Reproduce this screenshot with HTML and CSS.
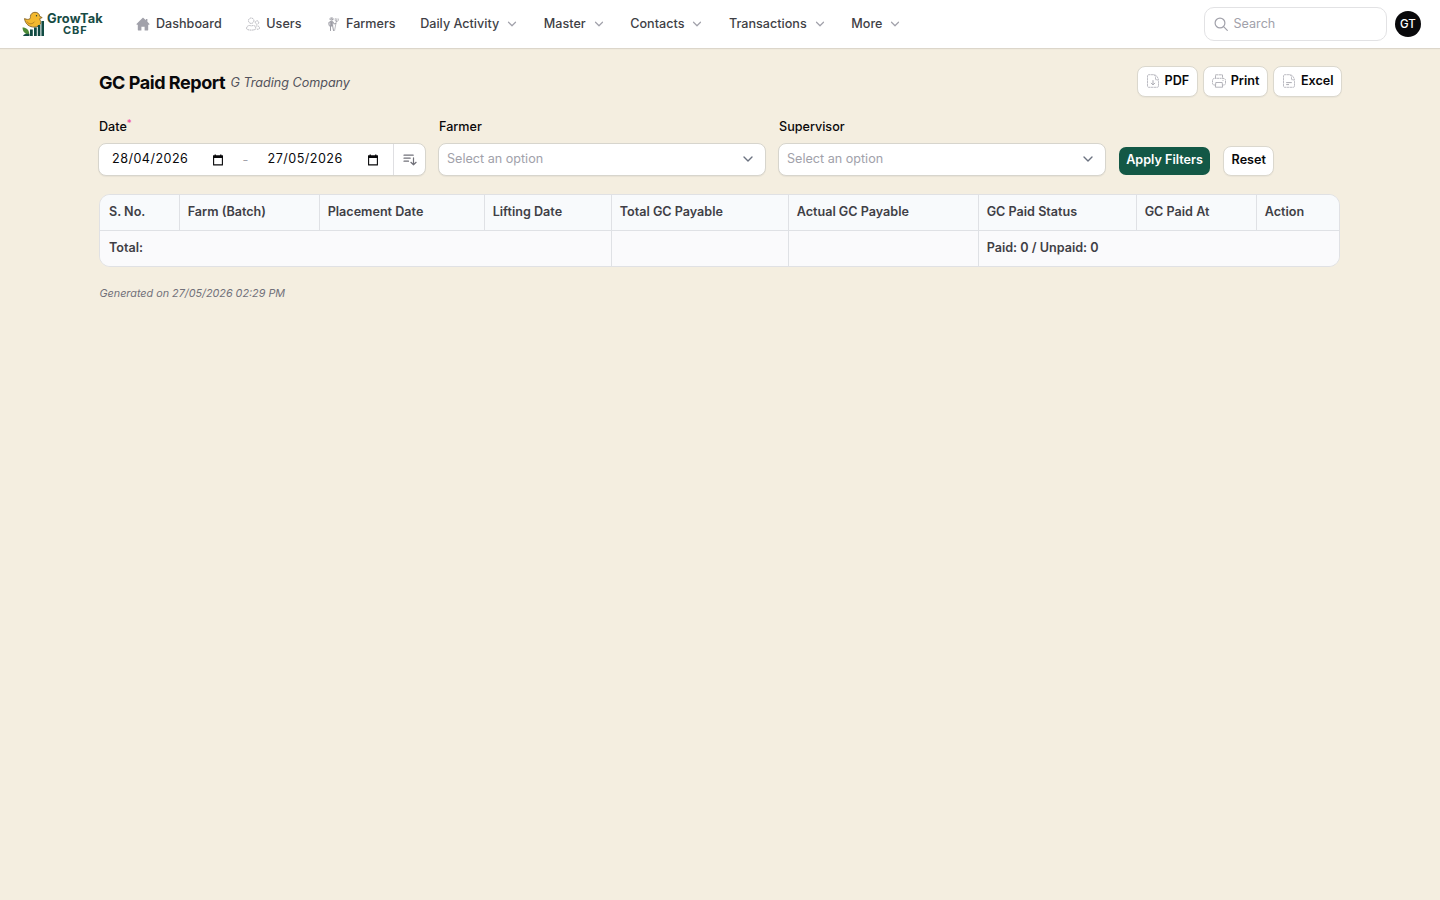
FILE: index.html
```html
<!DOCTYPE html>
<html lang="en">
<head>
<meta charset="utf-8">
<title>GC Paid Report</title>
<link rel="stylesheet" href="styles.css">
</head>
<body>
<svg class="defs" width="0" height="0">
  <symbol id="chevron" viewBox="0 0 20 20"><path d="M5 7.5l5 5 5-5" fill="none" stroke="currentColor" stroke-width="1.7" stroke-linecap="round" stroke-linejoin="round"/></symbol>
  <symbol id="calendar" viewBox="0 0 12 12"><path d="M1.600 2h8.800v8.900H1.600z" fill="none" stroke="currentColor" stroke-width="1.100" stroke-linejoin="round"/><path d="M1 1.600h10v2.300H1zM2.600.5h1.300v2H2.600zM8.100.5h1.300v2H8.100z" fill="currentColor"/></symbol>
</svg>
<header class="topbar">
  <a class="logo">
    <svg class="logo-mark" viewBox="0 0 23 26">
      <path d="M2.500 7.600C4.500 8.500 6.500 8.800 8 7.700 8.700 7.100 8.300 6.200 8.400 5.400 8.600 3 10.500 1.300 13 1.300c2.700 0 4.600 1.700 4.600 4l2.600 1.300-2.500 1c0 1.300 1.200 2.200 1 4.200-.3 2.500-2.600 4.300-6.200 4.300-5 0-9.200-2.700-10-8.500z" fill="#f4b92f" stroke="#846327" stroke-width=".9"/>
      <path d="M5 10.500c1.300 3 5.500 3 7.500.2" fill="none" stroke="#a97820" stroke-width=".9"/>
      <circle cx="14.500" cy="4.800" r=".7" fill="#173f38"/>
      <path d="M8 18.500h2.800V25H8zM12 16.500h2.800V25H12zM15.800 14h2.600v11h-2.600zM19.400 10H22v15h-2.600z" fill="#124b43"/>
      <path d="M.5 16.500c4 0 6.500 2 6.800 7C3.300 23.300.7 21 .5 16.500z" fill="#4c8b37"/>
      <path d="M1 25c1-2 3.500-2.700 6.500-1.700V25z" fill="#124b43"/>
    </svg>
    <span class="logo-text"><span>GrowTak</span><span class="logo-sub">CBF</span></span>
  </a>
  <nav class="nav">
    <a class="nav-item">
      <svg class="nav-icon" viewBox="0 0 14 14"><path d="M6.500.9L.7 6.700c-.4.500-.1 1 .4 1h.7V13c0 .3.200.5.500.5H5.400V9.800h3.200v3.700h3.100c.3 0 .5-.2.500-.5V7.700h.7c.5 0 .8-.5.400-1L11.400 4.800V2H9.900v1.300L7.500.9c-.3-.3-.7-.3-1 0z" fill="#a1a1aa"/></svg>
      Dashboard</a>
    <a class="nav-item">
      <svg class="nav-icon" viewBox="0 0 14 14"><g fill="none" stroke="#a1a1aa" stroke-width=".75" stroke-dasharray="1.700 .5"><circle cx="5.200" cy="3.700" r="2.700"/><circle cx="11" cy="5.500" r="1.700"/><path d="M.6 11.600c0-2 1.200-3.100 3-3.100.8 0 1 .4 1.700.4s1-.4 1.800-.4c1.800 0 2.700 1.500 2.700 3.100 0 1-2 1.500-4.600 1.500s-4.600-.5-4.600-1.500zM9.600 9.200c2-.8 4 .2 4 1.800 0 .9-1.200 1.300-2.700 1.300"/></g></svg>
      Users</a>
    <a class="nav-item">
      <svg class="nav-icon" viewBox="0 0 14 14"><g fill="none" stroke="#9d9da5" stroke-linecap="round"><path d="M3.600 2h4M4.800.9h1.600" stroke-width=".9"/><circle cx="5.600" cy="2.700" r=".9" stroke-width=".7"/><path d="M4.600 4.700L2.800 5.500l.3 3 1 .8M5.500 5v4M6.900 4.900l1.200 2 1.700-.3" stroke-width="1"/><path d="M4.500 8.700v4.800M6.600 8.700l.9 4.800M4.700 4.700h2v4h-2z" stroke-width="1"/><path d="M10.300 4.500L8.600 13.500M9.300 1.500l-.1 1.600c.1 1.600 2.600 1.900 3 .4l.2-1.500M10.900 1.600l-.4 2.800" stroke-width=".7"/></g></svg>
      Farmers</a>
    <a class="nav-item">Daily Activity<svg class="nav-chevron"><use href="#chevron"/></svg></a>
    <a class="nav-item">Master<svg class="nav-chevron"><use href="#chevron"/></svg></a>
    <a class="nav-item">Contacts<svg class="nav-chevron"><use href="#chevron"/></svg></a>
    <a class="nav-item">Transactions<svg class="nav-chevron"><use href="#chevron"/></svg></a>
    <a class="nav-item">More<svg class="nav-chevron"><use href="#chevron"/></svg></a>
  </nav>
  <div class="search">
    <svg class="search-icon" viewBox="0 0 14 14"><circle cx="6" cy="6" r="4.900" fill="none" stroke="#a1a1aa" stroke-width="1.200"/><path d="M9.600 9.600l3.700 3.700" stroke="#a1a1aa" stroke-width="1.200" stroke-linecap="round"/></svg>
    <span>Search</span>
  </div>
  <div class="avatar">GT</div>
</header>
<main class="page">
  <div class="heading">
    <h1 class="title">GC Paid Report</h1>
    <span class="company">G Trading Company</span>
    <div class="actions">
      <a class="btn"><svg class="btn-icon" viewBox="0 0 14 14"><g fill="none" stroke="#a1a1aa" stroke-width=".7"><path d="M7.500.7H2.700c-.7 0-1.200.5-1.200 1.200v10.200c0 .7.500 1.200 1.200 1.200h8.600c.7 0 1.200-.5 1.200-1.200V7.500c0-1.200-.8-1.800-1.800-1.800H9.500V3.500C9.500 2 8.700.7 7.500.7zM8.500.8c2.200.7 3.600 2.500 4 5.200" stroke-dasharray="2.500 .4"/><path d="M7 6.200v4.600M5 8.900l2 2 2-2" stroke-width=".9"/></g></svg>PDF</a>
      <a class="btn"><svg class="btn-icon" viewBox="0 0 14 14"><g fill="none" stroke="#a1a1aa" stroke-width=".8"><path d="M3.500 4.300V.8h7v3.500" stroke-dasharray="3 .4"/><path d="M3.500 11H2.200C1 11 .5 10.200.5 9.200V6.500c0-1.500 1-2.100 2.500-2.200h8c1.500.1 2.500.7 2.500 2.200v2.700c0 1-.5 1.800-1.700 1.800h-1.300" stroke-dasharray="2 .5"/><path d="M3.800 8.500h6.400l.4 4.700H3.400zM10.500 6.400h1"/></g></svg>Print</a>
      <a class="btn"><svg class="btn-icon" viewBox="0 0 14 14"><g fill="none" stroke="#a1a1aa" stroke-width=".7"><path d="M7.500.7H2.700c-.7 0-1.200.5-1.200 1.200v10.200c0 .7.500 1.200 1.200 1.200h8.600c.7 0 1.200-.5 1.200-1.200V7.500c0-1.200-.8-1.800-1.800-1.800H9.500V3.500C9.500 2 8.700.7 7.500.7zM8.500.8c2.200.7 3.600 2.500 4 5.200" stroke-dasharray="2.500 .4"/><path d="M4.200 8.600h5.600M4.200 10.600H7" stroke-width=".9"/></g></svg>Excel</a>
    </div>
  </div>
  <div class="filters">
    <div class="field">
      <label class="label">Date<sup class="required">*</sup></label>
      <div class="control dates">
        <span class="date">28/04/2026</span><svg class="calendar"><use href="#calendar"/></svg>
        <span class="dash">-</span>
        <span class="date">27/05/2026</span><svg class="calendar"><use href="#calendar"/></svg>
        <span class="sort"><svg viewBox="0 0 14 12" width="14" height="12"><g fill="none" stroke="#71717a" stroke-width="1.200" stroke-linecap="round" stroke-linejoin="round"><path d="M1 1.200h9.200M1 4.200h6.200M1 7.200h4.500M10.500 3.800v7M7.900 8.300l2.600 2.500 2.600-2.500"/></g></svg></span>
      </div>
    </div>
    <div class="field">
      <label class="label">Farmer</label>
      <div class="control select"><span>Select an option</span><svg class="select-chevron"><use href="#chevron"/></svg></div>
    </div>
    <div class="field">
      <label class="label">Supervisor</label>
      <div class="control select"><span>Select an option</span><svg class="select-chevron"><use href="#chevron"/></svg></div>
    </div>
    <div class="filter-actions"><a class="apply">Apply Filters</a><a class="btn reset">Reset</a></div>
  </div>
  <div class="table-wrap">
    <table class="report">
      <colgroup><col class="c1"><col class="c2"><col class="c3"><col class="c4"><col class="c5"><col class="c6"><col class="c7"><col class="c8"><col class="c9"></colgroup>
      <thead><tr><th>S. No.</th><th>Farm (Batch)</th><th>Placement Date</th><th>Lifting Date</th><th>Total GC Payable</th><th>Actual GC Payable</th><th>GC Paid Status</th><th>GC Paid At</th><th>Action</th></tr></thead>
      <tbody><tr><td colspan="4">Total:</td><td></td><td></td><td colspan="3">Paid: 0 / Unpaid: 0</td></tr></tbody>
    </table>
  </div>
  <p class="generated">Generated on 27/05/2026 02:29 PM</p>
</main>
</body>
</html>
```
FILE: styles.css
```css
* { box-sizing: border-box; }
body { margin: 0; min-height: 900px; background: #f4eee0; color: #09090b; font: 12.6px/18px Inter, sans-serif; }
svg { display: block; flex: none; }
.defs { position: absolute; }
.topbar { height: 48px; display: flex; align-items: center; background: #fff; box-shadow: 0 1px 1px rgba(9,9,11,.1); padding: 0 19px 0 22px; }
.logo { display: flex; width: 114px; gap: 2px; }
.logo-mark { width: 23px; height: 26px; }
.logo-text { font: 700 12.8px/12px Inter, sans-serif; color: #174b45; padding-top: 2px; letter-spacing: .15px; }
.logo-text span { display: block; }
.logo-text .logo-sub { font-size: 11px; line-height: 11px; letter-spacing: .9px; padding-left: 16px; }
.nav { display: flex; gap: 24.6px; }
.nav-item { display: flex; align-items: center; gap: 6px; font-weight: 500; color: #3f3f46; white-space: nowrap; }
.nav-icon { width: 14px; height: 14px; }
.nav-chevron { width: 14px; height: 14px; color: #a1a1aa; }
.search { margin-left: auto; width: 183px; height: 34px; border: 1px solid #e2e2e4; border-radius: 10px; display: flex; align-items: center; gap: 5.5px; padding-left: 9px; color: #a1a1aa; }
.search-icon { width: 14px; height: 14px; }
.avatar { width: 26px; height: 26px; border-radius: 50%; background: #09090b; color: #fff; margin-left: 8px; font: 500 11.5px/26px Inter, sans-serif; text-align: center; }
.page { padding: 18px 98px 0; }
.heading { display: flex; height: 31px; align-items: flex-start; }
.title { margin: 5px 0 0 1px; font: 700 18px/24px Inter, sans-serif; letter-spacing: -.45px; }
.company { margin: 8px 0 0 5.4px; font-style: italic; letter-spacing: -.02px; color: #52525b; }
.actions { margin-left: auto; display: flex; gap: 5px; }
.btn { height: 31px; display: flex; align-items: center; gap: 4.5px; padding: 0 7.5px 1px 8.5px; border: 1px solid #dbd8ce; border-radius: 8px; background: #fff; font-weight: 600; box-shadow: 0 1px 1px rgba(9,9,11,.04); }
.btn-icon { width: 14px; height: 14px; }
.filters { display: flex; gap: 12px; margin-top: 20px; }
.field { width: 328px; }
.label { display: block; height: 18px; padding-left: 1px; margin-bottom: 8px; font-weight: 500; line-height: 19px; }
.required { color: #ec4899; font-size: 10px; line-height: 0; margin-left: 0; vertical-align: 4px; font-weight: 400; }
.control { height: 33px; background: #fff; border: 1px solid #d7d5cd; border-radius: 8px; display: flex; align-items: center; padding-bottom: 1px; box-shadow: 0 1px 1px rgba(9,9,11,.05); }
.dates { padding: 0 0 0 13px; }
.date { width: 99.500px; letter-spacing: .46px; padding-bottom: 1px; }
.calendar { width: 12px; height: 12px; }
.dash { width: 44px; text-align: center; color: #a1a1aa; }
.sort { margin-left: auto; width: 32px; height: 31px; border-left: 1px solid #dfdfe2; display: flex; align-items: center; justify-content: center; }
.select { justify-content: space-between; padding-left: 8px; padding-right: 9.5px; color: #a1a1aa; }
.select-chevron { width: 16px; height: 16px; color: #6b7280; }
.filter-actions { display: flex; align-items: flex-start; padding: 30px 0 0 1px; }
.apply { height: 28px; width: 91px; background: #135846; border-radius: 7px; color: #fff; font-weight: 600; line-height: 26px; text-align: center; white-space: nowrap; }
.reset { height: 30px; margin: -1px 0 0 13px; width: 51px; padding: 0 0 2px .5px; justify-content: center; }
.table-wrap { margin: 18px 2px 0 1px; border: 1px solid #e0e1e4; border-radius: 11px; overflow: hidden; background: #fafafa; height: 73px; }
.report { width: 100%; border-collapse: separate; border-spacing: 0; table-layout: fixed; }
.report th, .report td { text-align: left; font-weight: 600; color: #3f3f46; padding: 0 8px 2px 9px; border-right: 1px solid #dfe1e5; white-space: nowrap; }
.report th { height: 36px; background: #f8fafc; border-bottom: 1px solid #dfe1e5; }
.report td { height: 35px; background: #fafafc; }
.report th + th, .report td + td { padding-left: 7.7px; }
.report th:last-child, .report td:last-child { border-right: 0; }
.c1 { width: 80px; }
.c2 { width: 140px; }
.c3 { width: 165px; }
.c4 { width: 127px; }
.c5 { width: 177px; }
.c6 { width: 190px; }
.c7 { width: 158px; }
.c8 { width: 120px; }
.generated { margin: 18px 0 0 1.5px; font-size: 10.800px; font-style: italic; color: #71717a; }
```
